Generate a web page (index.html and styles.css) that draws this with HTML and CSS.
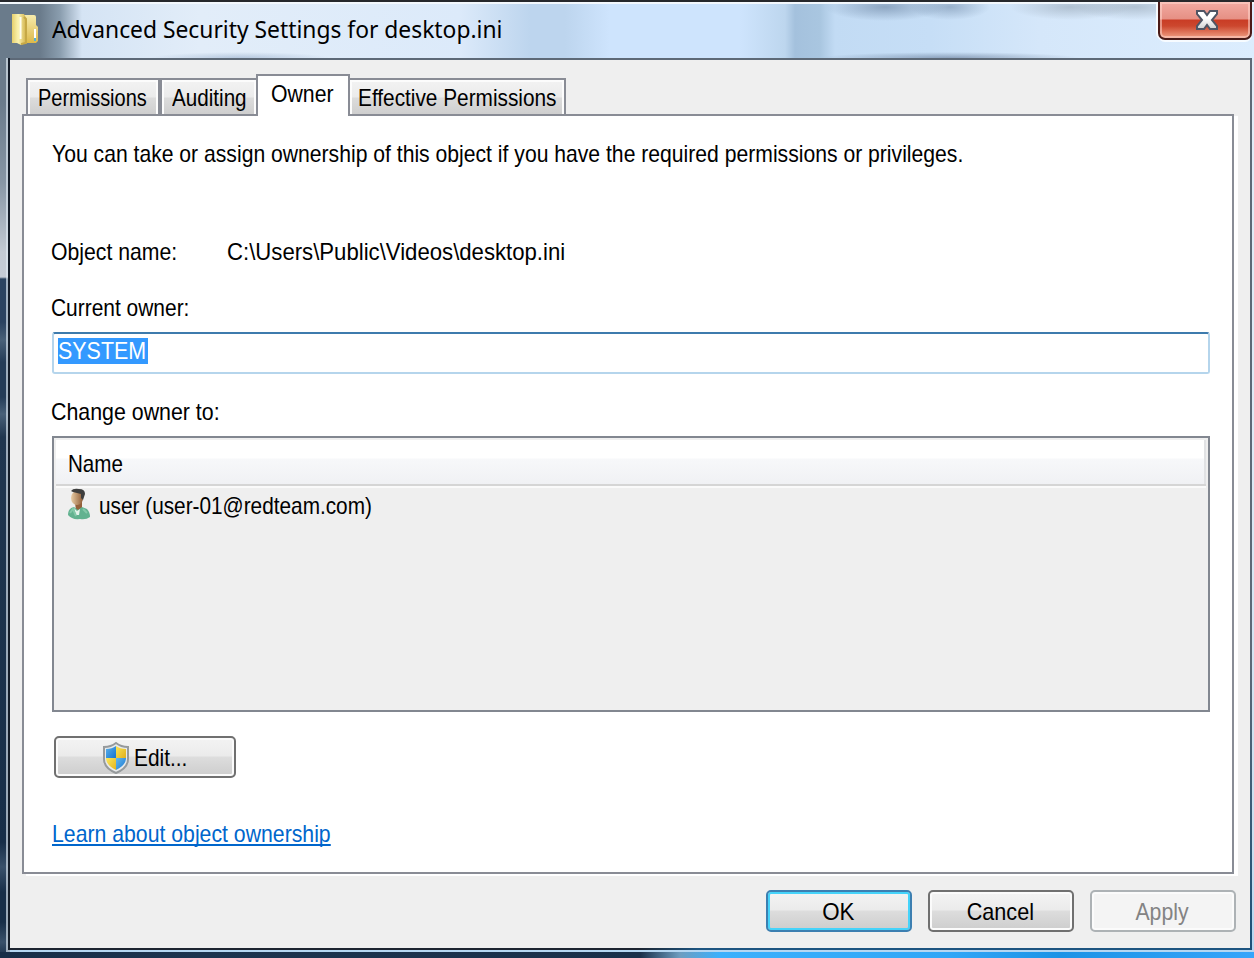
FILE: index.html
```
<!DOCTYPE html>
<html lang="en">
<head>
<meta charset="utf-8">
<title>Advanced Security Settings for desktop.ini</title>
<link rel="stylesheet" href="styles.css">
</head>
<body>
<div class="window">
  <header class="titlebar">
    <svg class="folder" width="28" height="34" viewBox="0 0 28 34">
      <defs>
        <linearGradient id="fa" x1="0" x2="1" y1="0" y2="0"><stop offset="0" stop-color="#e6cf6c"/><stop offset=".45" stop-color="#fbf3b0"/><stop offset="1" stop-color="#d2b24c"/></linearGradient>
        <linearGradient id="fb" x1="0" x2="0" y1="0" y2="1"><stop offset="0" stop-color="#f7ebac"/><stop offset="1" stop-color="#dcb94b"/></linearGradient>
      </defs>
      <path d="M11 2h12q2 0 2 2v8l2 2v14l-2 2H12z" fill="url(#fb)"/>
      <path d="M1 1h12l2 4v25l-5 2-4-2H1z" fill="url(#fa)"/>
      <path d="M9.500 4v22" stroke="#fffdf0" stroke-width="2"/>
      <path d="M13 4l2 2v24l-5 1" fill="none" stroke="#c6a846" stroke-width="2"/>
      <path d="M24 16v9" stroke="#fff" stroke-width="2"/><path d="M24 25v3" stroke="#52b3d6" stroke-width="2"/>
    </svg>
    <h1 class="title"><span class="t t-title">Advanced Security Settings for desktop.ini</span></h1>
    <div class="close">
      <svg width="26" height="24" viewBox="0 0 26 24"><defs><linearGradient id="xg" x1="0" x2="0" y1="0" y2="1"><stop offset=".4" stop-color="#fff"/><stop offset="1" stop-color="#cfcfcf"/></linearGradient></defs><path d="M3 3h7l3 4 3-4h7v3l-5 6 5 6v3h-7l-3-4-3 4H3v-3l5-6-5-6z" fill="url(#xg)" stroke="#4f5564" stroke-width="2"/></svg>
    </div>
  </header>
  <main class="client">
    <nav class="tabs">
      <div class="tab tab-permissions"><span class="t t-permissions">Permissions</span></div>
      <div class="tab tab-auditing"><span class="t t-auditing">Auditing</span></div>
      <div class="tab tab-owner"><span class="t t-owner">Owner</span></div>
      <div class="tab tab-effective"><span class="t t-effective">Effective Permissions</span></div>
    </nav>
    <section class="panel">
      <p class="intro"><span class="t t-intro">You can take or assign ownership of this object if you have the required permissions or privileges.</span></p>
      <div class="object"><div class="object-label"><span class="t t-object">Object name:</span></div><div><span class="t t-path">C:\Users\Public\Videos\desktop.ini</span></div></div>
      <div class="current"><span class="t t-current">Current owner:</span></div>
      <div class="field"><div class="selection"><span class="t t-system">SYSTEM</span></div></div>
      <div class="change"><span class="t t-change">Change owner to:</span></div>
      <div class="list">
        <div class="list-head"><span class="t t-name">Name</span></div>
        <div class="list-row">
          <svg class="user" width="24" height="32" viewBox="0 0 24 32">
            <defs><linearGradient id="skin" x1="0" x2="1" y1="0" y2="0"><stop offset="0" stop-color="#e9cda6"/><stop offset="1" stop-color="#8d5a34"/></linearGradient></defs>
            <path d="M8 14h7v9H9z" fill="#94603a"/>
            <path d="M1 27q0-7 6-8l4 3 4-3 5 2q3 3 3 8-4 3-10 2-8 1-12-4z" fill="#62b290"/>
            <path d="M7 20l2 7h3l1-6-3 2z" fill="#e3f2ea"/>
            <path d="M3 25l3-4 3 7M16 21l4 4" fill="none" stroke="#83c8a8" stroke-width="2"/>
            <ellipse cx="10" cy="10" rx="6" ry="7" fill="url(#skin)"/>
            <path d="M4 3q2-3 8-2 6 0 6 5l-2 6-2-2V6L6 4z" fill="#3e3e3e"/>
          </svg>
          <span class="t t-user">user (user-01@redteam.com)</span>
        </div>
      </div>
      <div class="button edit">
        <svg width="28" height="32" viewBox="0 0 28 32">
          <defs>
            <clipPath id="sh"><path d="M14 4q4 3 10 3v10q-1 7-10 11-9-4-10-11V7q6 0 10-3z"/></clipPath>
            <linearGradient id="bl" x1="0" x2="1" y1="0" y2="1"><stop offset="0" stop-color="#64b7ee"/><stop offset="1" stop-color="#1474cf"/></linearGradient>
            <linearGradient id="ye" x1="0" x2="1" y1="0" y2="1"><stop offset="0" stop-color="#fbe95c"/><stop offset="1" stop-color="#e2b01c"/></linearGradient>
          </defs>
          <path d="M14 1q5 4 12 4v12q0 9-12 14Q2 26 2 17V5q7 0 12-4z" fill="#e8eaeb" stroke="#969a9c" stroke-width="2"/>
          <g clip-path="url(#sh)"><path d="M4 2h10v14H4z" fill="url(#bl)"/><path d="M14 2h10v14H14z" fill="url(#ye)"/><path d="M4 16h10v14H4z" fill="url(#ye)"/><path d="M14 16h10v14H14z" fill="url(#bl)"/></g>
        </svg>
        <span class="t t-edit">Edit...</span>
      </div>
      <a class="link"><span class="t t-link">Learn about object ownership</span></a>
    </section>
    <footer class="actions">
      <div class="button ok"><span class="t t-ok">OK</span></div>
      <div class="button"><span class="t t-cancel">Cancel</span></div>
      <div class="button disabled"><span class="t t-apply">Apply</span></div>
    </footer>
  </main>
</div>
</body>
</html>
```
FILE: styles.css
```
* { box-sizing: border-box; }
body { margin: 0; overflow: hidden; font: 24px/28px "Liberation Sans", Arial, sans-serif; color: #000; }
h1, p { margin: 0; }
svg { display: block; flex: none; }
.t { display: inline-block; white-space: pre; transform: scaleX(.885); transform-origin: 0 50%; }
.t-permissions { transform: scaleX(.832); }
.t-auditing { transform: scaleX(.86); }
.t-effective { transform: scaleX(.867); }
.t-intro { transform: scaleX(.881); }
.t-object { transform: scaleX(.884); }
.t-path { transform: scaleX(.923); }
.t-current { transform: scaleX(.872); }
.t-system { transform: scaleX(.893); }
.t-change { transform: scaleX(.89); }
.t-name { transform: scaleX(.858); }
.t-user { transform: scaleX(.866); }
.t-edit { transform: scaleX(.87); }

.window {
  width: 1254px; height: 958px; padding-left: 6px; border-top: 2px solid #26282c;
  background:
    linear-gradient(90deg, #172e48 0, #1c344f 200px, #19304a 640px, #6d9dc0 680px, #3bb0fc 720px, #2fa6f7 950px, #1c93e6 1060px, #35a5fb 1254px) 0 950px / 1254px 8px no-repeat,
    linear-gradient(180deg, #6a7b8b 0, #6a7b8b 100px, #8796a5 180px, #c2cad4 250px, #c5ccd6 275px, #2a4360 277px, #2a4260 320px, #486078 338px, #243c57 360px, #243c57 395px, #486078 412px, #20364f 435px, #172e48 840px, #39516b 865px, #172e48 890px, #172e48 920px, #39516b 940px, #172e48 956px) 0 0 / 10px 956px no-repeat,
    linear-gradient(180deg, #dfeefe 0, #dce9f7 420px, #b9d5ec 700px, #a5c9e7 850px, #60b0ee 956px);
}
.titlebar {
  position: relative; display: flex; height: 56px; margin-left: -6px; padding-left: 11px; border-top: 2px solid #f3f8fd;
  background:
    radial-gradient(ellipse 60px 14px at 885px 3px, rgba(105,130,160,.6), transparent),
    radial-gradient(ellipse 40px 13px at 950px 3px, rgba(105,130,160,.5), transparent),
    radial-gradient(ellipse 60px 13px at 1070px 3px, rgba(130,145,160,.45), transparent),
    radial-gradient(ellipse 60px 13px at 1135px 3px, rgba(130,145,160,.45), transparent),
    radial-gradient(ellipse 130px 6px at 950px 54px, rgba(80,100,130,.5), transparent),
    radial-gradient(ellipse 90px 6px at 240px 54px, rgba(100,130,170,.35), transparent),
    linear-gradient(90deg, #6a7b8b 0, #6a7b8b 40px, #8a9dae 60px, #d5e4f4 82px, #e2edf9 200px, #dceafa 460px, #bdd5ee 530px, #bdd5ee 565px, #cee4fd 610px, #cee4fd 740px, #bdd6ee 785px, #a4c1dd 795px, #a9c6e0 820px, #c2dbf4 835px, #c6def6 930px, #d5e7fa 1040px, #dcedfe 1254px);
}
.folder { margin-top: 9px; }
.title { margin: 8px 0 0 13px; font: 400 24px/34px "Noto Sans", "Open Sans", sans-serif; }
.t-title { transform: scaleX(.951); }
.close {
  position: absolute; right: 2px; top: -2px; width: 94px; height: 38px; display: flex; justify-content: center; padding: 6px 0 0 3px;
  border: 2px solid #4a1b18; border-top: 0; border-radius: 0 0 7px 7px;
  background: linear-gradient(#f1aaa2 0, #e69084 17px, #c93c25 18px, #cc472e 24px, #ea9075 34px);
  box-shadow: inset 0 0 0 2px rgba(255,215,205,.55), 0 2px 0 0 rgba(250,253,255,.9), -2px 0 0 0 rgba(250,253,255,.9);
}
.client {
  width: 1244px; height: 892px; margin-left: 2px; padding: 14px 12px 0; border: 2px solid transparent;
  background:
    linear-gradient(#efefef, #efefef) padding-box,
    linear-gradient(#141d29, #141d29) 0 0 / 2px 892px no-repeat border-box,
    linear-gradient(#5d6977 0, #5d6977 600px, #1c5078 892px) 100% 0 / 2px 892px no-repeat border-box,
    linear-gradient(#5d6977, #5d6977) 0 0 / 1244px 2px no-repeat border-box,
    linear-gradient(90deg, #1c2430 0, #1c2430 630px, #1c5480 690px) 0 100% / 1244px 2px no-repeat border-box;
  box-shadow: 0 0 0 2px rgba(225,235,245,.65);
}

.tabs { display: flex; align-items: flex-end; height: 42px; margin-bottom: -2px; padding-left: 4px; position: relative; z-index: 1; }
.tab {
  height: 38px; border: 2px solid #898c95; padding: 4px 0 0 10px;
  background: linear-gradient(#f3f3f3 0, #ebebeb 17px, #dcdcdc 18px, #cdcdcd 36px);
  box-shadow: inset 2px 2px #fcfcfc, inset -2px 0 #fcfcfc;
}
.tab-permissions { width: 134px; }
.tab-auditing { width: 98px; }
.tab-owner { z-index: 2; width: 94px; height: 42px; margin-left: -2px; padding: 4px 0 0 13px; background: #fff; border-bottom: 0; box-shadow: none; }
.tab-effective { width: 218px; margin-left: -2px; padding-left: 8px; }

.panel { width: 1212px; height: 760px; border: 2px solid #898c95; background: #fff; box-shadow: 4px 2px #fff; padding: 24px 22px 0 28px; display: flex; flex-direction: column; align-items: flex-start; }
.panel > * { flex: none; }
.intro { height: 98px; }
.object { display: flex; height: 56px; margin-left: -1px; }
.object-label { width: 176px; }
.current { height: 38px; margin-left: -1px; }
.field { width: 1158px; height: 42px; padding: 4px; border: 2px solid #b5d5ec; border-top-color: #3d7bad; border-radius: 3px; }
.selection { width: 90px; height: 26px; background: #3399ff; color: #fff; line-height: 26px; overflow: hidden; }
.change { margin: 24px 0 0 -1px; height: 38px; }
.list { width: 1158px; height: 276px; border: 2px solid #828790; background: #efefef; padding: 2px; }
.list-head { height: 46px; padding: 10px 0 0 12px; background: linear-gradient(#fff 0, #fff 18px, #f7f8fa 19px, #f0f1f4 44px); border-bottom: 2px solid #d5d5d5; box-shadow: 0 2px #fafafa, inset -2px 0 #e1e2e4; }
.list-row { display: flex; padding: 2px 0 0 11px; }
.list-row .t { margin: 4px 0 0 8px; }

.button {
  display: flex; justify-content: center; width: 146px; height: 42px; padding-top: 6px; border: 2px solid #707070; border-radius: 5px;
  background: linear-gradient(#f3f3f3 0, #ebebeb 18px, #dddddd 19px, #cdcdcd 38px); box-shadow: inset 0 0 0 2px #fbfbfb;
}
.button .t { position: relative; transform-origin: 50% 50%; }
.actions .t { margin-right: 2px; }
.button .t-ok { transform: scaleX(.93); }
.button .t-cancel { transform: scaleX(.9); }
.ok { border-color: #3c7fb1; box-shadow: inset 0 0 0 2px #45d3fa; }
.disabled { border-color: #adb2b5; background: #f4f4f4; color: #838383; }
.edit { width: 182px; margin: 24px 0 0 2px; justify-content: flex-start; padding: 4px 0 0 46px; }
.edit .t { margin: 2px 0 0 4px; transform-origin: 0 50%; }
.link { margin: 42px 0 0; color: #0066cc; height: 28px; }
.t-link { border-bottom: 2px solid #0066cc; line-height: 24px; padding-top: 2px; height: 26px; }
.actions { display: flex; justify-content: flex-end; gap: 16px; margin: 16px 2px 0 0; }
```
